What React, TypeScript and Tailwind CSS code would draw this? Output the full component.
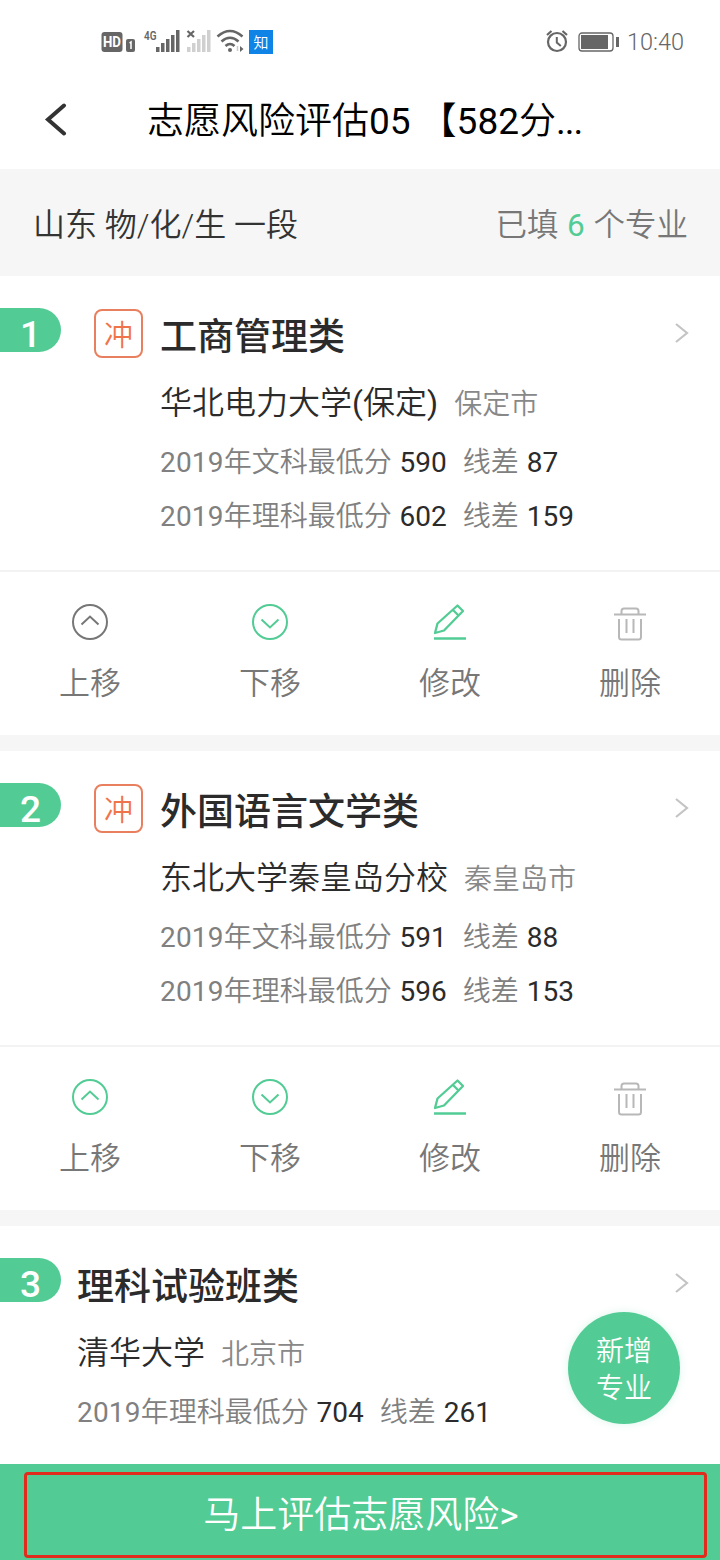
import React from 'react';

interface Score {
    label: string;
    score: number;
    diff: number;
}

interface Major {
    rank: number;
    tag?: string;
    name: string;
    school: string;
    campus?: string;
    city: string;
    scores: Score[];
}

const majors: Major[] = [
    {
        rank: 1,
        tag: '冲',
        name: '工商管理类',
        school: '华北电力大学',
        campus: '保定',
        city: '保定市',
        scores: [
            { label: '年文科最低分', score: 590, diff: 87 },
            { label: '年理科最低分', score: 602, diff: 159 },
        ],
    },
    {
        rank: 2,
        tag: '冲',
        name: '外国语言文学类',
        school: '东北大学秦皇岛分校',
        city: '秦皇岛市',
        scores: [
            { label: '年文科最低分', score: 591, diff: 88 },
            { label: '年理科最低分', score: 596, diff: 153 },
        ],
    },
    {
        rank: 3,
        name: '理科试验班类',
        school: '清华大学',
        city: '北京市',
        scores: [{ label: '年理科最低分', score: 704, diff: 261 }],
    },
];

export default function App() {
    return (
        <div className="relative flex h-[1560px] w-[720px] flex-col overflow-hidden bg-white font-['Roboto','Noto_Sans_CJK_SC',sans-serif] font-[350] text-[#333]">
            <StatusBar />
            <Header />
            <div className="flex h-[107px] shrink-0 items-center justify-between bg-[#f6f6f6] pt-[5px] pr-8 pl-[33px] text-[32px]">
                <span>山东 物/化/生 一段</span>
                <span className="pt-px text-[31.500px] [word-spacing:1px] text-[#777]">
                    已填 <span className="font-normal text-[#52cc94]">6</span> 个专业
                </span>
            </div>
            <main className="flex flex-1 flex-col gap-4 overflow-hidden bg-[#f6f6f6]">
                {majors.map((major) => (
                    <MajorCard key={major.rank} major={major} />
                ))}
            </main>
            <footer className="flex h-24 shrink-0 bg-[#52cc94] pt-2 pr-[13px] pb-[2px] pl-6">
                <button className="flex-1 rounded-[4px] border-[3px] border-[#e02b1d] pr-[9px] text-[37px] leading-none text-white">
                    马上评估志愿风险<span className="font-normal">&gt;</span>
                </button>
            </footer>
            <button className="absolute top-[1312px] left-[568px] h-28 w-28 rounded-full bg-[#52cc94] pt-1 text-[28px] leading-[37px] text-white shadow-[0_0_8px_rgba(82,204,148,0.2)]">
                新增
                <br />
                专业
            </button>
        </div>
    );
}

function StatusBar() {
    return (
        <div className="flex h-[84px] shrink-0 items-center justify-between pr-[36px] pl-[101px] text-[#666]">
            <div className="flex items-center">
                <svg width="172" height="30" viewBox="0 0 172 30">
                    <rect x="0.500" y="5" width="21" height="20" rx="3" fill="#666" />
                    <text x="11" y="20" textAnchor="middle" fontSize="14" fontWeight="700" textLength="18" lengthAdjust="spacingAndGlyphs" fill="#fff">HD</text>
                    <rect x="25" y="12" width="9" height="13" rx="2" fill="#666" />
                    <path d="M28.500 16l1.500-1v7" stroke="#fff" strokeWidth="1.500" fill="none" />
                    <text x="43" y="13" fontSize="12" fontWeight="600" textLength="12.500" lengthAdjust="spacingAndGlyphs" fill="#666">4G</text>
                    <g fill="#666">
                        <rect x="55" y="20" width="3.500" height="5" />
                        <rect x="60" y="16" width="3.500" height="9" />
                        <rect x="65" y="12" width="3.500" height="13" />
                        <rect x="70" y="8" width="3.500" height="17" />
                        <rect x="75" y="3" width="3.500" height="22" />
                    </g>
                    <path d="M86.500 4l6.500 6M93 4l-6.500 6" stroke="#666" strokeWidth="2.200" />
                    <g fill="#d0d0d0">
                        <rect x="86" y="20" width="3.500" height="5" />
                        <rect x="91" y="16" width="3.500" height="9" />
                        <rect x="96" y="12" width="3.500" height="13" />
                        <rect x="101" y="8" width="3.500" height="17" />
                        <rect x="106" y="3" width="3.500" height="22" />
                    </g>
                    <g fill="none" stroke="#666" strokeWidth="2.600">
                        <path d="M116.500 9.500q12.500-11 25 0" />
                        <path d="M120.500 14.500q8.500-7.500 17 0" />
                        <path d="M124.500 19q4.500-4 9 0" />
                    </g>
                    <circle cx="129" cy="23" r="2" fill="#666" />
                    <path d="M139 19l3.500 3-3.500 3z" fill="#666" />
                    <path d="M136.500 19v5" stroke="#ccc" strokeWidth="1.500" />
                    <rect x="148" y="3" width="24" height="24" fill="#0f84e6" />
                    <text x="160" y="20.500" textAnchor="middle" fontSize="15" fill="#fff">知</text>
                </svg>
            </div>
            <div className="flex items-center">
                <svg width="74" height="26" viewBox="0 0 74 26" fill="none" stroke="#666">
                    <circle cx="11" cy="13" r="9" strokeWidth="2.200" />
                    <path d="M10.800 8v5.500l4 3.500" strokeWidth="2" />
                    <path d="M1 6l4.500-4M21 6l-4.500-4" strokeWidth="2.200" />
                    <rect x="33" y="4" width="34" height="18" rx="3" strokeWidth="1.300" />
                    <rect x="35" y="6" width="27" height="14" fill="#666" stroke="none" />
                    <rect x="70" y="8" width="3" height="10" fill="#666" stroke="none" />
                </svg>
                <span className="mt-[2px] ml-[7px] text-[23.500px] leading-none">10:40</span>
            </div>
        </div>
    );
}

function Header() {
    return (
        <header className="flex h-[85px] shrink-0 items-center pb-[14px] text-black">
            <svg className="mb-[2px] ml-[44px]" width="24" height="34" viewBox="0 0 24 34" fill="none" stroke="#333" strokeWidth="4" strokeLinecap="round">
                <path d="M20 3.500L4 17.500l16 14" />
            </svg>
            <h1 className="mt-[3px] ml-[79px] text-[37px] leading-none">
                志愿风险评估<span className="font-normal">05</span> 【<span className="font-normal">582</span>分<span className="font-normal tracking-[-1px]">...</span>
            </h1>
        </header>
    );
}

function MajorCard({ major }: { major: Major }) {
    const hasActions = major.rank < 3;

    return (
        <section className={`shrink-0 bg-white ${hasActions ? 'h-[459px]' : 'h-[238px]'}`}>
            <div className={`flex items-start pt-8 ${hasActions ? 'h-[294px]' : ''}`}>
                <div className="flex h-11 w-[61px] shrink-0 items-end justify-center rounded-r-full bg-[#52cc94] text-[37px] leading-[34px] font-medium text-white">
                    {major.rank}
                </div>
                {major.tag && (
                    <div className="mt-px ml-[33px] flex h-[49px] w-[49px] shrink-0 items-center justify-center rounded-lg border-2 border-[#e8805f] pt-[5px] text-[29px] leading-none text-[#f0744a]">
                        {major.tag}
                    </div>
                )}
                <div className={major.tag ? 'ml-[17px] flex-1' : 'ml-4 flex-1'}>
                    <div className="flex h-[54px] items-center justify-between pr-[31px]">
                        <h2 className="mt-1 text-[37px] leading-none font-medium text-[#2b2b2b]">{major.name}</h2>
                        <svg className="mb-1" width="14" height="20" viewBox="0 0 14 20" fill="none" stroke="#c4c4c4" strokeWidth="2.200">
                            <path d="M1 1l11 9-11 9" />
                        </svg>
                    </div>
                    <div className="mt-[14px] flex h-[54px] items-baseline gap-4 text-[32px] leading-[54px] text-[#2b2b2b]">
                        <span>
                            {major.school}
                            {major.campus && (
                                <>
                                    <span className="font-normal">(</span>
                                    {major.campus}
                                    <span className="font-normal">)</span>
                                </>
                            )}
                        </span>
                        <span className="text-[28px] text-[#888]">{major.city}</span>
                    </div>
                    <div className="mt-[6px]">
                        {major.scores.map((item) => (
                            <ScoreLine key={item.label} item={item} />
                        ))}
                    </div>
                </div>
            </div>
            {hasActions && (
                <div className="grid h-[165px] grid-cols-4 border-t-2 border-[#f3f3f3] text-[31px] text-[#777]">
                    <Action label="上移">
                        <ArrowIcon up color={major.rank === 1 ? '#777' : '#52cc94'} />
                    </Action>
                    <Action label="下移">
                        <ArrowIcon color="#52cc94" />
                    </Action>
                    <Action label="修改">
                        <PencilIcon />
                    </Action>
                    <Action label="删除">
                        <TrashIcon />
                    </Action>
                </div>
            )}
        </section>
    );
}

function ScoreLine({ item }: { item: Score }) {
    return (
        <p className="h-[54px] text-[28px] leading-[54px] [word-spacing:1px] whitespace-pre text-[#808080]">
            <span className="font-normal tracking-[0.2px]">2019</span>
            {item.label} <span className="font-normal text-[#2b2b2b]">{item.score}</span>
            <span className="ml-4">线差</span> <span className="font-normal text-[#2b2b2b]">{item.diff}</span>
        </p>
    );
}

function Action({ label, children }: { label: string; children: React.ReactNode }) {
    return (
        <button className="flex flex-col items-center pt-[30px]">
            {children}
            <span className="mt-[22px] leading-[40px]">{label}</span>
        </button>
    );
}

function ArrowIcon({ up, color }: { up?: boolean; color: string }) {
    return (
        <svg width="40" height="40" viewBox="0 0 40 40" fill="none" stroke={color} strokeWidth="2">
            <circle cx="20" cy="20" r="17" />
            <path d={up ? 'M11.500 22.500L20 14.500l8.500 8' : 'M11.500 17.500l8.500 8 8.500-8'} />
        </svg>
    );
}

function PencilIcon() {
    return (
        <svg width="40" height="40" viewBox="0 0 40 40" fill="none" stroke="#52cc94" strokeWidth="2.300" strokeLinejoin="round">
            <path d="M27.500 3.500l5.500 5.500L14 28.500 5 31l2.500-9.500zM23 8l5.500 5.500" />
            <path d="M4 36.500h32" strokeWidth="2.500" />
        </svg>
    );
}

function TrashIcon() {
    return (
        <svg width="40" height="40" viewBox="0 0 40 40" fill="none" stroke="#b8b8b8" strokeWidth="2">
            <path d="M4 12.500h32M11.500 12V9q0-2.500 2.500-2.500h12q2.500 0 2.500 2.500v3" />
            <path d="M9 17v18q0 2.500 2.500 2.500h17q2.500 0 2.500-2.500V17M16.500 17v14M23.500 17v14" />
        </svg>
    );
}
